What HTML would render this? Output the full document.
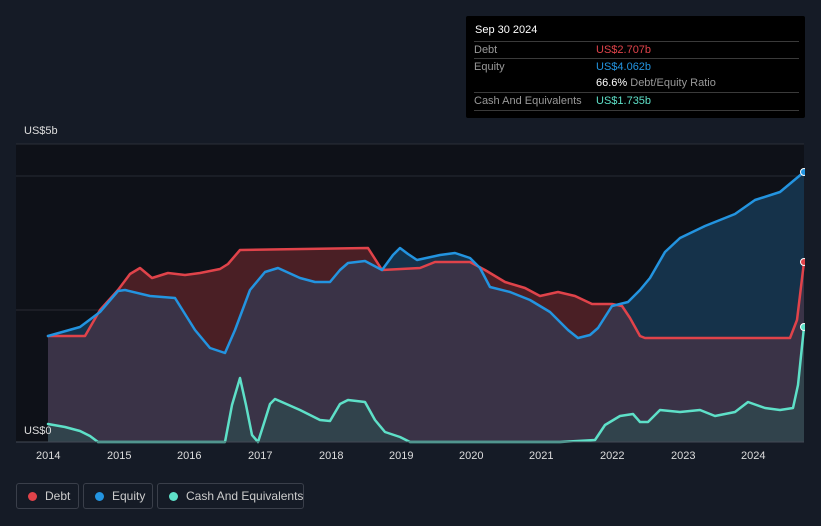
<!DOCTYPE html>
<html><head><style>
body{margin:0;width:821px;height:526px;background:#151b26;font-family:"Liberation Sans",sans-serif;overflow:hidden;position:relative}
.tt{position:absolute;left:466px;top:16px;width:339px;height:102px;background:#000;border-radius:2px}
.tt .h{position:absolute;left:9px;top:8px;color:#fff;font-size:11px}
.row{position:absolute;left:8px;width:325px;border-top:1px solid #3a3a3a;height:17px;font-size:11px;color:#999}
.row span{position:absolute;top:2px;white-space:nowrap}
.leg{position:absolute;top:483px;height:26px;border:1px solid #3a3f4a;border-radius:3px;color:#ccc;font-size:12px;box-sizing:border-box;white-space:nowrap}
.leg i{position:absolute;left:11px;top:8px;width:9px;height:9px;border-radius:50%}
.leg span{position:absolute;top:5px}
.ax{position:absolute;top:450px;color:#ddd;font-size:11px}
</style></head><body>
<svg width="821" height="526" style="position:absolute;left:0;top:0">
<defs>
<clipPath id="eq"><path d="M48,336 L80,327 L100,312 L112,298 L118,291 L125,290 L150,296 L175,298 L195,330 L210,348 L225,353 L235,330 L250,290 L265,272 L278,268 L300,278 L315,282 L330,282 L340,270 L348,263 L365,261 L382,270 L393,255 L400,248 L408,254 L417,260 L440,255 L455,253 L470,258 L480,268 L490,287 L510,292 L530,300 L550,312 L568,330 L578,338 L590,335 L598,328 L612,306 L628,302 L640,290 L650,278 L665,252 L680,238 L705,226 L735,214 L755,200 L780,192 L804,172 L804,442 L48,442 Z"/></clipPath>
</defs>
<rect x="16" y="144" width="788" height="298" fill="#0e1118"/>
<line x1="16" y1="144" x2="804" y2="144" stroke="#2a2f38"/>
<line x1="16" y1="176" x2="804" y2="176" stroke="#252a33"/>
<line x1="16" y1="310" x2="804" y2="310" stroke="#2a2a35"/>
<path d="M48,336 L85,336 L100,310 L118,290 L130,274 L140,268 L152,278 L168,273 L185,275 L200,273 L220,269 L228,264 L240,250 L368,248 L382,270 L420,268 L435,262 L470,262 L485,270 L505,282 L525,288 L540,296 L558,292 L575,296 L592,304 L612,304 L622,306 L630,318 L640,336 L645,338 L790,338 L797,320 L804,262 L804,442 L48,442 Z" fill="#4a1f25"/>
<path d="M48,336 L80,327 L100,312 L112,298 L118,291 L125,290 L150,296 L175,298 L195,330 L210,348 L225,353 L235,330 L250,290 L265,272 L278,268 L300,278 L315,282 L330,282 L340,270 L348,263 L365,261 L382,270 L393,255 L400,248 L408,254 L417,260 L440,255 L455,253 L470,258 L480,268 L490,287 L510,292 L530,300 L550,312 L568,330 L578,338 L590,335 L598,328 L612,306 L628,302 L640,290 L650,278 L665,252 L680,238 L705,226 L735,214 L755,200 L780,192 L804,172 L804,442 L48,442 Z" fill="#15324a"/>
<path clip-path="url(#eq)" d="M48,336 L85,336 L100,310 L118,290 L130,274 L140,268 L152,278 L168,273 L185,275 L200,273 L220,269 L228,264 L240,250 L368,248 L382,270 L420,268 L435,262 L470,262 L485,270 L505,282 L525,288 L540,296 L558,292 L575,296 L592,304 L612,304 L622,306 L630,318 L640,336 L645,338 L790,338 L797,320 L804,262 L804,442 L48,442 Z" fill="#3a3347"/>
<path d="M48,424 L65,427 L80,431 L90,436 L98,442 L225,442 L232,405 L240,378 L246,405 L252,435 L258,442 L265,420 L270,404 L275,399 L300,410 L320,420 L330,421 L340,404 L348,400 L365,402 L375,420 L385,432 L400,437 L410,442 L560,442 L595,440 L605,425 L620,416 L633,414 L640,422 L648,422 L660,410 L680,412 L700,410 L715,416 L735,412 L748,402 L765,408 L780,410 L793,408 L798,385 L804,327 L804,442 L48,442 Z" fill="#2e4a4f" opacity="0.7"/>
<g fill="none" stroke-width="2.5" stroke-linejoin="round" stroke-linecap="round">
<path stroke="#e0434a" d="M48,336 L85,336 L100,310 L118,290 L130,274 L140,268 L152,278 L168,273 L185,275 L200,273 L220,269 L228,264 L240,250 L368,248 L382,270 L420,268 L435,262 L470,262 L485,270 L505,282 L525,288 L540,296 L558,292 L575,296 L592,304 L612,304 L622,306 L630,318 L640,336 L645,338 L790,338 L797,320 L804,262"/>
<path stroke="#2394e0" d="M48,336 L80,327 L100,312 L112,298 L118,291 L125,290 L150,296 L175,298 L195,330 L210,348 L225,353 L235,330 L250,290 L265,272 L278,268 L300,278 L315,282 L330,282 L340,270 L348,263 L365,261 L382,270 L393,255 L400,248 L408,254 L417,260 L440,255 L455,253 L470,258 L480,268 L490,287 L510,292 L530,300 L550,312 L568,330 L578,338 L590,335 L598,328 L612,306 L628,302 L640,290 L650,278 L665,252 L680,238 L705,226 L735,214 L755,200 L780,192 L804,172"/>
<path stroke="#5ee0c8" d="M48,424 L65,427 L80,431 L90,436 L98,442 L225,442 L232,405 L240,378 L246,405 L252,435 L258,442 L265,420 L270,404 L275,399 L300,410 L320,420 L330,421 L340,404 L348,400 L365,402 L375,420 L385,432 L400,437 L410,442 L560,442 L595,440 L605,425 L620,416 L633,414 L640,422 L648,422 L660,410 L680,412 L700,410 L715,416 L735,412 L748,402 L765,408 L780,410 L793,408 L798,385 L804,327"/>
</g>
<line x1="16" y1="442" x2="804" y2="442" stroke="#444a55"/>
<circle cx="804" cy="172" r="3.5" fill="#2394e0" stroke="#fff"/>
<circle cx="804" cy="262" r="3.5" fill="#e0434a" stroke="#fff"/>
<circle cx="804" cy="327" r="3.5" fill="#5ee0c8" stroke="#fff"/>
<rect x="805" y="144" width="16" height="300" fill="#151b26"/>
</svg>
<div style="position:absolute;left:24px;top:125px;color:#ddd;font-size:11px">US$5b</div>
<div style="position:absolute;left:24px;top:425px;color:#ddd;font-size:11px">US$0</div>
<div class="ax" style="left:36px">2014</div><div class="ax" style="left:107px">2015</div><div class="ax" style="left:177px">2016</div><div class="ax" style="left:248px">2017</div><div class="ax" style="left:319px">2018</div><div class="ax" style="left:389px">2019</div><div class="ax" style="left:459px">2020</div><div class="ax" style="left:529px">2021</div><div class="ax" style="left:600px">2022</div><div class="ax" style="left:671px">2023</div><div class="ax" style="left:741px">2024</div>
<div class="tt"><div class="h">Sep 30 2024</div>
<div class="row" style="top:25px"><span>Debt</span><span style="left:122px;color:#e0434a">US$2.707b</span></div>
<div class="row" style="top:42px"><span>Equity</span><span style="left:122px;color:#2394e0">US$4.062b</span></div>
<div class="row" style="top:59px;border:none"><span style="left:122px;color:#fff">66.6% <b style="font-weight:normal;color:#999">Debt/Equity Ratio</b></span></div>
<div class="row" style="top:76px"><span>Cash And Equivalents</span><span style="left:122px;color:#5ee0c8">US$1.735b</span></div>
<div class="row" style="top:94px;height:0"></div>
</div>
<div class="leg" style="left:16px;width:63px"><i style="background:#e0434a"></i><span style="left:28px">Debt</span></div>
<div class="leg" style="left:83px;width:70px"><i style="background:#2394e0"></i><span style="left:28px">Equity</span></div>
<div class="leg" style="left:157px;width:147px"><i style="background:#5ee0c8"></i><span style="left:28px">Cash And Equivalents</span></div>
</body></html>
